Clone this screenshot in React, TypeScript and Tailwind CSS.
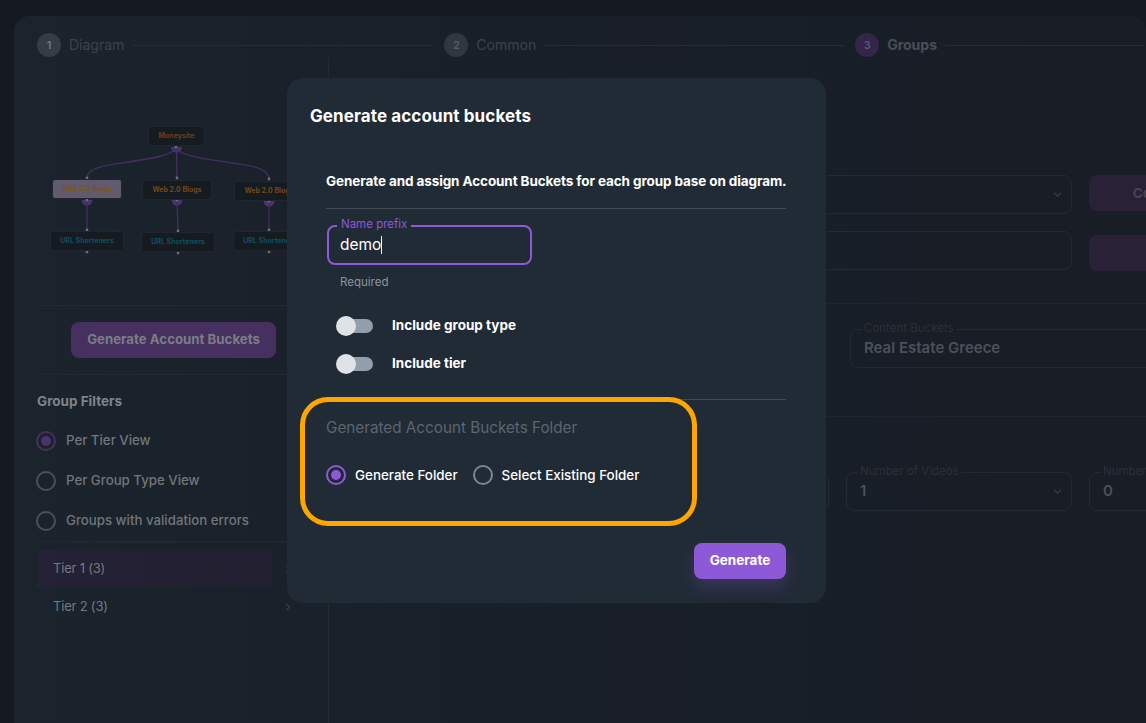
import { ChevronDown, ChevronRight } from 'lucide-react';

const nodes = [
    { label: 'Moneysite', box: 'left-[111px] top-[69px] w-[57px] bg-[#161b22]', text: 'text-[#6b3c1e]' },
    { label: 'Web 2.0 Blogs', box: 'left-[15px] top-[122px] w-[70px] bg-[#625b70]', text: 'text-[#7a5518]' },
    { label: 'Web 2.0 Blogs', box: 'left-[105px] top-[123px] w-[70px] bg-[#161b22]', text: 'text-[#6e4a17]' },
    { label: 'Web 2.0 Blogs', box: 'left-[197px] top-[124px] w-[70px] bg-[#161b22]', text: 'text-[#6e4a17]' },
    { label: 'URL Shorteners', box: 'left-[13px] top-[174px] w-[74px] bg-[#161b22]', text: 'text-[#0f4f5f]' },
    { label: 'URL Shorteners', box: 'left-[104px] top-[175px] w-[74px] bg-[#161b22]', text: 'text-[#0f4f5f]' },
    { label: 'URL Shorteners', box: 'left-[196px] top-[174px] w-[74px] bg-[#161b22]', text: 'text-[#0f4f5f]' },
];

const dots = [
    [139, 91], [140, 122], [50, 122], [232, 123],
    [50, 144], [140, 144], [232, 145],
    [50, 174], [141, 175], [232, 174],
    [50, 196], [141, 197], [232, 196],
];

function Diagram() {
    return (
        <div className="relative h-[249px] border-b border-[#222932]">
            <svg className="absolute left-0 -top-px" width="291" height="249" fill="none">
                <path d="M134 91 a5.5 5.5 0 0 0 11 0z" fill="#4a3370" />
                <path d="M44.5 144 a5.5 5.5 0 0 0 11 0z" fill="#4a3370" />
                <path d="M134.5 144 a5.5 5.5 0 0 0 11 0z" fill="#4a3370" />
                <path d="M226.5 145 a5.5 5.5 0 0 0 11 0z" fill="#4a3370" />
                <g stroke="#42305f" strokeWidth="1.3">
                    <path d="M139 92C135 100 110 103 85 107C65 110 50 112 50 122" />
                    <path d="M139.500 92L140 122" />
                    <path d="M139 92C143 100 170 103 195 107C215 110 232 112 232 123" />
                    <path d="M50 144V174" />
                    <path d="M140 144L141 175" />
                    <path d="M232 145V174" />
                </g>
                {dots.map(([x, y]) => (
                    <circle key={`${x}-${y}`} cx={x} cy={y} r="1.4" fill="#6b7078" />
                ))}
            </svg>
            {nodes.map((node, i) => (
                <div key={i} className={`absolute h-[20px] rounded-[3px] border border-[#20262f] flex items-center justify-center ${node.box}`}>
                    <span className={`text-[7px] font-bold whitespace-nowrap ${node.text}`}>{node.label}</span>
                </div>
            ))}
        </div>
    );
}

function Step({ n, label, bold, circle, line }: { n: number; label: string; bold?: boolean; circle: string; line: string }) {
    return (
        <div className="flex items-center">
            <div className={`w-6 h-6 rounded-full flex items-center justify-center text-[11px] font-semibold ${circle}`}>{n}</div>
            <span className={`ml-2 mb-[2px] text-[14px] whitespace-nowrap ${bold ? 'font-bold text-[#4a4e56]' : 'text-[#3c434c]'}`}>{label}</span>
            <div className={`h-px bg-[#252c35] ml-2 ${line}`} />
        </div>
    );
}

function BgRadio({ label, checked }: { label: string; checked?: boolean }) {
    return (
        <div className="flex items-center h-5 -ml-px">
            <div className={`w-5 h-5 rounded-full border-2 flex items-center justify-center ${checked ? 'border-[#46305f]' : 'border-[#4a5059]'}`}>
                {checked && <div className="w-2.5 h-2.5 rounded-full bg-[#4a3370]" />}
            </div>
            <span className="ml-[10px] text-[13.250px] font-medium text-[#71767c]">{label}</span>
        </div>
    );
}

function BgField({ label, value, className, chevron }: { label?: string; value?: string; className: string; chevron?: boolean }) {
    return (
        <div className={`relative h-[39px] shrink-0 rounded-lg border border-[#232a33] flex items-center justify-between pl-[13px] pr-[7px] ${className}`}>
            {label && <span className="absolute -top-[10px] left-[11px] px-[2px] bg-[#181d26] text-[11.500px] text-[#2a3039] whitespace-nowrap">{label}</span>}
            <span className="text-[15px] font-semibold text-[#4c5159] whitespace-nowrap">{value}</span>
            {chevron && <ChevronDown size={13} className="text-[#3a4048]" />}
        </div>
    );
}

function Toggle({ label }: { label: string }) {
    return (
        <div className="flex items-center h-5 ml-[11px]">
            <div className="relative w-[36px] h-[14px] rounded-full bg-[#919eab]">
                <div className="absolute -left-[1px] -top-[3px] w-5 h-5 rounded-full bg-[#dfe3e8]" />
            </div>
            <span className="ml-[19px] mb-[2px] text-[13.500px] font-bold text-white">{label}</span>
        </div>
    );
}

function ModalRadio({ label, checked }: { label: string; checked?: boolean }) {
    return (
        <div className="flex items-center h-5">
            <div className={`w-5 h-5 rounded-full border-2 flex items-center justify-center ${checked ? 'border-[#8e59d6]' : 'border-[#7b8691]'}`}>
                {checked && <div className="w-2.5 h-2.5 rounded-full bg-[#8e59d6]" />}
            </div>
            <span className="ml-[9px] text-[13.400px] font-medium text-white">{label}</span>
        </div>
    );
}

function Modal() {
    return (
        <div className="absolute left-[287px] top-[78px] w-[539px] h-[525px] rounded-2xl bg-[#212b36] pt-[26px]">
            <h2 className="ml-[23px] h-6 leading-6 text-[17px] font-bold text-white tracking-[0.1px]">Generate account buckets</h2>
            <div className="ml-[39px] w-[460px]">
                <p className="mt-[43px] h-5 leading-5 text-[13.500px] font-bold text-white tracking-[-0.1px] whitespace-nowrap">
                    Generate and assign Account Buckets for each group base on diagram.
                </p>
                <div className="mt-[17px] h-px bg-[#414b56]" />
                <div className="relative mt-[16px] ml-px w-[205px] h-[40px] rounded-lg border-2 border-[#8e59d6] flex items-center pl-[11px]">
                    <span className="absolute -top-[11px] left-[8px] px-[4px] bg-[#212b36] text-[11.500px] leading-4 text-[#8e59d6]">Name prefix</span>
                    <span className="text-[15.500px] text-white">demo</span>
                    <span className="w-px h-[18px] bg-white" />
                </div>
                <p className="mt-[9px] ml-[14px] h-4 leading-4 text-[11.500px] text-[#8b949e]">Required</p>
                <div className="mt-[26px] flex flex-col gap-[18px]">
                    <Toggle label="Include group type" />
                    <Toggle label="Include tier" />
                </div>
                <div className="mt-[25px] h-px bg-[#414b56]" />
                <p className="mt-[18px] h-5 leading-5 text-[15.250px] text-[#5b6570] whitespace-nowrap">Generated Account Buckets Folder</p>
                <div className="mt-[27px] flex gap-[15px]">
                    <ModalRadio label="Generate Folder" checked />
                    <ModalRadio label="Select Existing Folder" />
                </div>
                <div className="mt-[58px] flex justify-end">
                    <button className="w-[92px] h-[36px] pb-[2px] rounded-lg bg-[#8e59d6] text-[13.500px] font-bold text-white shadow-[0_8px_16px_rgba(142,89,214,0.24)]">
                        Generate
                    </button>
                </div>
            </div>
        </div>
    );
}

export default function App() {
    return (
        <div className="relative w-[1146px] h-[723px] overflow-hidden bg-[#151a21] font-['Inter','Liberation_Sans',sans-serif]">
            <div className="ml-[14px] mt-[16px] h-[707px] pl-[23px] pt-[17px] rounded-t-2xl bg-gradient-to-r from-[#1b232c] via-[#191f28] to-[#181d26]">
                <div className="flex items-center w-[1200px]">
                    <Step n={1} label="Diagram" circle="bg-[#343d46] text-[#70777f]" line="w-[301px] mr-[11px]" />
                    <Step n={2} label="Common" circle="bg-[#2f3740] text-[#565d65]" line="w-[300px] mr-[11px]" />
                    <Step n={3} label="Groups" bold circle="bg-[#33264a] text-[#5e5470]" line="w-[200px]" />
                </div>

                <div className="flex">
                    <div className="w-[292px] h-[666px] shrink-0 border-r border-[#232a33]">
                        <Diagram />
                        <div className="h-[69px] border-b border-[#222932] pt-[16px] pl-[34px]">
                            <button className="w-[205px] h-[36px] rounded-lg bg-[#46305f] text-[13.250px] font-bold text-[#7b7d85]">
                                Generate Account Buckets
                            </button>
                        </div>
                        <h3 className="mt-[16px] h-5 leading-5 text-[13.500px] font-bold text-[#7f8489]">Group Filters</h3>
                        <div className="mt-[20px] flex flex-col gap-5">
                            <BgRadio label="Per Tier View" checked />
                            <BgRadio label="Per Group Type View" />
                            <BgRadio label="Groups with validation errors" />
                        </div>
                        <div className="mt-[10px] h-px bg-[#222932]" />
                        <div className="mt-[8px] flex items-center h-[38px]">
                            <div className="w-[235px] h-full flex items-center pl-[16px] bg-gradient-to-r from-[#252136] to-[#211f30] text-[13px] tracking-[-0.2px] text-[#74797f]">Tier 1 (3)</div>
                            <ChevronRight size={12} className="ml-[10px] text-[#4a5059]" />
                        </div>
                        <div className="flex items-center h-[38px]">
                            <div className="w-[235px] pl-[16px] text-[13px] tracking-[-0.2px] text-[#74797f]">Tier 2 (3)</div>
                            <ChevronRight size={12} className="ml-[10px] text-[#4a5059]" />
                        </div>
                    </div>

                    <div className="flex-1 min-w-0 overflow-hidden">
                        <div className="mt-[118px] pl-[21px] flex gap-[17px] w-[900px] items-start">
                            <BgField className="w-[722px]" chevron />
                            <div className="w-[122px] h-[36px] shrink-0 rounded-lg bg-[#292237] flex items-center justify-center text-[13.500px] font-bold text-[#44474f]">Copy</div>
                        </div>
                        <div className="mt-[17px] pl-[21px] flex gap-[17px] w-[900px] items-start">
                            <BgField className="w-[722px]" />
                            <div className="mt-[4px] w-[122px] h-[36px] shrink-0 rounded-lg bg-[#292237]" />
                        </div>
                        <div className="mt-[32px] h-px bg-[#1f252e]" />
                        <div className="mt-[25px] pl-[521px] w-[900px]">
                            <BgField className="w-[370px]" label="Content Buckets" value="Real Estate Greece" />
                        </div>
                        <div className="mt-[48px] h-px bg-[#1f252e]" />
                        <div className="mt-[55px] pl-[21px] flex gap-[17px] w-[1000px]">
                            <BgField className="w-[479px]" />
                            <BgField className="w-[226px]" label="Number of Videos" value="1" chevron />
                            <BgField className="w-[200px]" label="Number" value="0" />
                        </div>
                    </div>
                </div>
            </div>

            <Modal />

            {/* annotation drawn over the screenshot */}
            <div className="absolute left-[300px] top-[397px] w-[397px] h-[129px] rounded-[28px] border-[5px] border-[#ffa500]" />
        </div>
    );
}
